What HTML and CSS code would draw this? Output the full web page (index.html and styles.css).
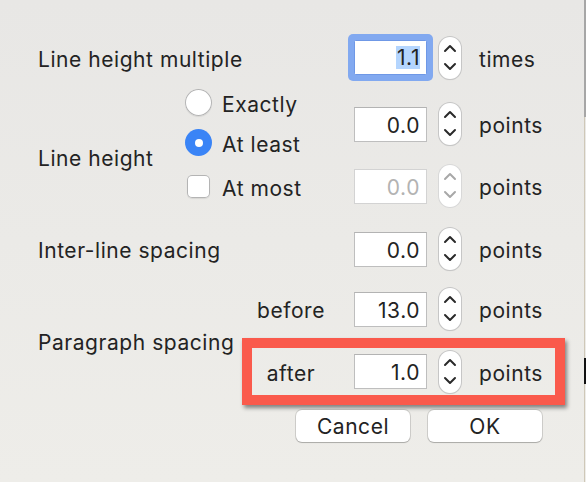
FILE: index.html
```html
<!DOCTYPE html>
<html>
<head>
<meta charset="utf-8">
<link rel="stylesheet" href="styles.css">
</head>
<body>
<div class="window">
  <main class="dialog">
    <div class="row first">
      <div class="left"><span class="label">Line height multiple</span></div>
      <div class="ctl">
        <div class="field focused"><span class="sel">1.1</span></div>
        <div class="stepper"><svg viewBox="0 0 22 42" width="22" height="42"><polyline points="6,14 11,9 16,14"/><polyline points="6,27 11,32 16,27"/></svg></div>
        <div class="unit">times</div>
      </div>
    </div>

    <section class="lh">
      <div class="lh-label label">Line height</div>
      <div class="choices">
        <div class="choice"><span class="radio"></span><span class="choice-text">Exactly</span></div>
        <div class="choice second"><span class="radio on"></span><span class="choice-text">At least</span></div>
        <div class="choice third"><span class="checkbox"></span><span class="choice-text">At most</span></div>
      </div>
      <div class="lh-fields">
        <div class="ctl">
          <div class="field">0.0</div>
          <div class="stepper"><svg viewBox="0 0 22 42" width="22" height="42"><polyline points="6,14 11,9 16,14"/><polyline points="6,27 11,32 16,27"/></svg></div>
          <div class="unit">points</div>
        </div>
        <div class="ctl disabled">
          <div class="field">0.0</div>
          <div class="stepper"><svg viewBox="0 0 22 42" width="22" height="42"><polyline points="6,14 11,9 16,14"/><polyline points="6,27 11,32 16,27"/></svg></div>
          <div class="unit">points</div>
        </div>
      </div>
    </section>

    <div class="row inter">
      <div class="left"><span class="label">Inter-line spacing</span></div>
      <div class="ctl">
        <div class="field">0.0</div>
        <div class="stepper"><svg viewBox="0 0 22 42" width="22" height="42"><polyline points="6,14 11,9 16,14"/><polyline points="6,27 11,32 16,27"/></svg></div>
        <div class="unit">points</div>
      </div>
    </div>

    <section class="para">
      <div class="para-label label">Paragraph spacing</div>
      <div class="para-rows">
        <div class="sub-row before">
          <div class="sub-label">before</div>
          <div class="ctl">
            <div class="field">13.0</div>
            <div class="stepper"><svg viewBox="0 0 22 42" width="22" height="42"><polyline points="6,14 11,9 16,14"/><polyline points="6,27 11,32 16,27"/></svg></div>
            <div class="unit">points</div>
          </div>
        </div>
        <div class="sub-row highlight">
          <div class="sub-label">after</div>
          <div class="ctl">
            <div class="field">1.0</div>
            <div class="stepper"><svg viewBox="0 0 22 42" width="22" height="42"><polyline points="6,14 11,9 16,14"/><polyline points="6,27 11,32 16,27"/></svg></div>
            <div class="unit">points</div>
          </div>
        </div>
      </div>
    </section>

    <div class="buttons">
      <button class="btn">Cancel</button>
      <button class="btn">OK</button>
    </div>
  </main>
  <div class="edge">
    <div class="edge-top"></div>
    <div class="edge-line"><div class="edge-mark"></div></div>
  </div>
</div>
</body>
</html>
```

FILE: styles.css
```css
* { box-sizing: border-box; }

html, body {
  margin: 0;
  padding: 0;
  width: 586px;
  height: 482px;
  overflow: hidden;
}

body {
  background: linear-gradient(#e8e7e5, #eeede9);
  font-family: "Inter", "Liberation Sans", sans-serif;
  font-size: 21px;
  letter-spacing: 0.55px;
  color: #232323;
}

.window {
  display: flex;
  height: 482px;
}

.dialog {
  width: 584px;
  padding-left: 38px;
  padding-top: 34px;
  display: flex;
  flex-direction: column;
}

.label, .unit, .choice-text, .sub-label {
  display: block;
  line-height: 24px;
  padding-top: 4px;
  white-space: nowrap;
}

.row {
  display: flex;
  align-items: center;
}

.row .left {
  width: 316px;
}

.row.first { height: 47px; }

.ctl {
  display: flex;
  align-items: center;
  height: 42px;
}

.field {
  width: 73px;
  height: 35px;
  background: #fff;
  border: 1px solid #bebebe;
  border-top-color: #b3b3b3;
  text-align: right;
  padding-right: 6px;
  padding-top: 1px;
  line-height: 33px;
  border-radius: 0;
}

.field.focused {
  border-color: #6f98e6;
  border-radius: 1.5px;
  box-shadow: 0 0 0 6px #82a9f0;
  padding-top: 0;
}

.sel {
  background: #b4d5fe;
  padding: 1px 0 0 1px;
  display: inline-block;
  line-height: 22px;
}

.stepper {
  width: 22px;
  height: 42px;
  margin-left: 12px;
  background: #fff;
  border-radius: 11px;
  box-shadow: 0 0 0 1px #c6c6c6, 0 1px 1px rgba(0,0,0,0.12);
  display: flex;
}

.stepper svg { display: block; }

.stepper polyline {
  fill: none;
  stroke: #2a2a2a;
  stroke-width: 2;
  stroke-linecap: round;
  stroke-linejoin: round;
}

.unit {
  margin-left: 18px;
}

.disabled .field {
  color: #b3b3b3;
  border-color: #d3d3d3;
}

.disabled .stepper {
  box-shadow: 0 0 0 1px #d8d8d8;
}

.disabled .stepper polyline { stroke: #a8a8a8; }

/* Line height section */
.lh {
  display: flex;
  margin-top: 8px;
  height: 118px;
}

.lh-label {
  width: 147px;
  margin-top: 54px;
}

.choices {
  width: 169px;
  display: flex;
  flex-direction: column;
}

.choice {
  display: flex;
  align-items: center;
  height: 27px;
}

.choice.second { margin-top: 13px; }
.choice.third { margin-top: 17px; }

.radio {
  flex: none;
  width: 27px;
  height: 27px;
  border-radius: 50%;
  background: #fff;
  box-shadow: inset 0 0 0 1px #b4b4b4, 0 1px 1px rgba(0,0,0,0.08);
  margin-right: 10px;
  display: flex;
  align-items: center;
  justify-content: center;
}

.radio.on {
  background: #3a84f6;
  box-shadow: none;
}

.radio.on::after {
  content: "";
  width: 8px;
  height: 8px;
  border-radius: 50%;
  background: #fff;
}

.checkbox {
  flex: none;
  width: 23px;
  height: 23px;
  border-radius: 5px;
  background: #fff;
  box-shadow: inset 0 0 0 1px #b4b4b4, 0 1px 1px rgba(0,0,0,0.08);
  margin-left: 2px;
  margin-right: 12px;
}

.lh-fields {
  display: flex;
  flex-direction: column;
  padding-top: 14px;
  gap: 20px;
}

.row.inter {
  margin-top: 21px;
  height: 42px;
}

/* Paragraph section */
.para {
  display: flex;
  margin-top: 18px;
}

.para-label {
  width: 204px;
  margin-top: 39px;
}

.para-rows {
  display: flex;
  flex-direction: column;
}

.sub-row {
  display: flex;
  align-items: center;
}

.sub-label {
  width: 78px;
  text-align: center;
  margin-right: 24px;
}

.sub-row.before {
  padding-left: 10px;
  height: 42px;
}

.sub-row.highlight {
  margin-top: 8px;
  width: 323px;
  height: 67px;
  border: 10px solid #fa5a4c;
  box-shadow: 2px 3px 4px rgba(0,0,0,0.45);
}

.buttons {
  display: flex;
  justify-content: flex-end;
  gap: 18px;
  margin-top: 5px;
  padding-right: 42px;
}

.btn {
  font-family: inherit;
  font-size: 21px;
  letter-spacing: 0.55px;
  color: #232323;
  height: 32px;
  width: 114px;
  background: #fff;
  border: none;
  border-radius: 6px;
  box-shadow: 0 0 0 1px rgba(0,0,0,0.12), 0 1px 1px rgba(0,0,0,0.18);
  padding: 1px 0 0;
  line-height: 31px;
}

/* window edge artifact */
.edge {
  width: 2px;
  display: flex;
  flex-direction: column;
}

.edge-top {
  height: 117px;
  background: #a6a6a6;
}

.edge-line {
  flex: 1;
  border-left: 1px solid #cfc8b8;
  padding-top: 241px;
}

.edge-mark {
  height: 26px;
  margin-left: -1px;
  background: #111;
}
```
